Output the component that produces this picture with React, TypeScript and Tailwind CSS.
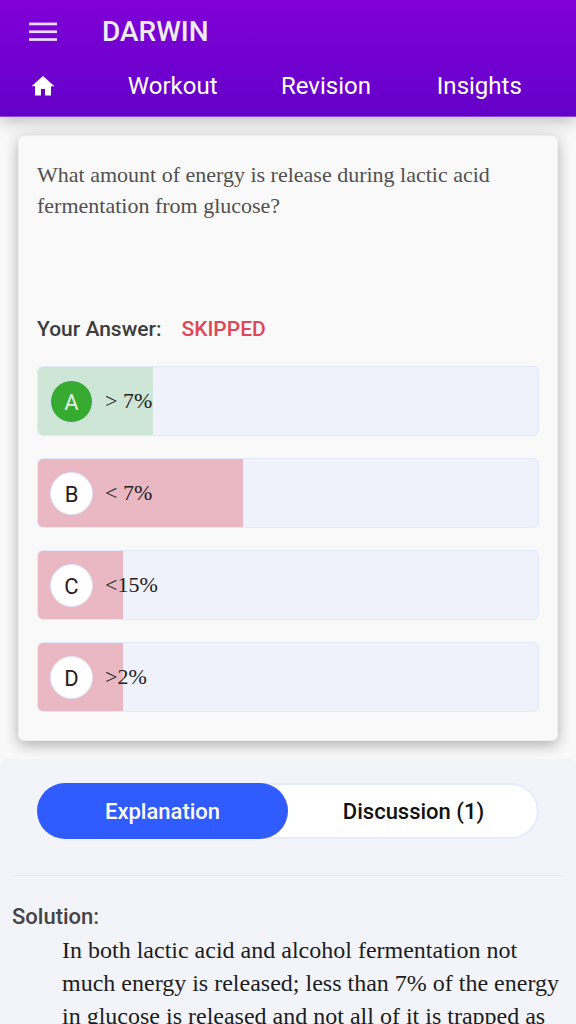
import React, { useState } from 'react';

interface Option {
  id: string;
  label: string;
  percent: number;
  correct?: boolean;
}

const navLinks = ['Workout', 'Revision', 'Insights'];

const options: Option[] = [
  { id: 'A', label: '> 7%', percent: 23, correct: true },
  { id: 'B', label: '< 7%', percent: 41 },
  { id: 'C', label: '<15%', percent: 17 },
  { id: 'D', label: '>2%', percent: 17 },
];

const Header = () => (
  <header className="relative z-10 border-b border-[#8f46dc] bg-linear-to-b from-[#8000d7] to-[#6400c8] text-white shadow-[0_4px_16px_rgba(0,0,0,0.25)]">
    <div className="flex h-16 items-center gap-11 px-7">
      <button type="button" aria-label="Open menu" className="text-[#ecdcf8]">
        <svg width="30" height="20" viewBox="0 0 30 20" fill="currentColor">
          <rect x="1" y="0.6" width="28" height="2.7" />
          <rect x="1" y="8.4" width="28" height="2.7" />
          <rect x="1" y="16.2" width="28" height="2.7" />
        </svg>
      </button>
      <h1 className="text-[28px] font-medium leading-8 text-[#ededed]">DARWIN</h1>
    </div>
    <nav className="flex h-13 items-start px-5 pt-1">
      <a href="#home" aria-label="Home" className="mr-[30px] flex h-9 w-[46px] items-center justify-center">
        <svg width="24" height="20" viewBox="0 0 24 20" fill="currentColor">
          <path d="M12 0 L23.5 10.3 H20 V19.6 H14 V13 H10 V19.6 H4 V10.3 H0.5 Z" />
        </svg>
      </a>
      {navLinks.map((link) => (
        <a key={link} href={`#${link.toLowerCase()}`} className="flex-1 text-center text-2xl leading-9">
          {link}
        </a>
      ))}
    </nav>
  </header>
);

const OptionRow = ({ option }: { option: Option }) => (
  <li className="relative flex h-[70px] items-center gap-3 overflow-hidden rounded-md border border-[#e2e8fd] bg-[#eff2fb] px-3">
    <div
      className={`absolute inset-y-0 left-0 ${option.correct ? 'bg-[#cde6d6]' : 'bg-[#e9b8c3]'}`}
      style={{ width: `${option.percent}%` }}
    />
    <span
      className={`relative flex size-[43px] items-center justify-center rounded-full border border-[#dfe3fa] pt-1 text-[22px] leading-6 ${
        option.correct ? 'bg-[#36ab30] text-[#e3f2e2]' : 'bg-white text-[#2c1820]'
      }`}
    >
      {option.id}
    </span>
    <span className="relative font-['Liberation_Serif',serif] text-[22px] leading-8 text-[#222]">{option.label}</span>
  </li>
);

const QuestionCard = () => (
  <section className="mx-[18px] mt-[18px] rounded-md border border-[#f0f0f0] bg-[#f9f9f9] px-[18px] pt-[23px] pb-7 shadow-[0_4px_14px_rgba(0,0,0,0.3)]">
    <p className="min-h-[154px] font-['Liberation_Serif',serif] text-[22px] leading-[31px] text-[#505050]">
      What amount of energy is release during lactic acid fermentation from glucose?
    </p>
    <p className="flex gap-5 text-[21px] font-medium leading-8 text-[#3c3c3c]">
      <span>Your Answer:</span>
      <span className="text-[#df4759]">SKIPPED</span>
    </p>
    <ul className="mt-[21px] flex flex-col gap-[22px]">
      {options.map((option) => (
        <OptionRow key={option.id} option={option} />
      ))}
    </ul>
  </section>
);

export default function App() {
  const [tab, setTab] = useState('explanation');

  const tabClass = (name: string) =>
    `h-14 flex-1 rounded-full text-[22px] font-medium ${tab === name ? 'bg-[#2f5bff] text-white' : 'text-[#111]'}`;

  return (
    <div className="min-h-screen bg-[#f9f9f9] font-[Roboto,sans-serif]">
      <Header />
      <main>
        <QuestionCard />
        <section className="mt-[18px] rounded-t-lg bg-[#f3f4fa] px-3 pt-6 pb-8">
          <div role="tablist" className="mx-[25px] flex h-14 items-center rounded-full bg-white inset-ring-2 inset-ring-[#e6eaff]">
            <button
              type="button"
              role="tab"
              aria-selected={tab === 'explanation'}
              className={tabClass('explanation')}
              onClick={() => setTab('explanation')}
            >
              Explanation
            </button>
            <button
              type="button"
              role="tab"
              aria-selected={tab === 'discussion'}
              className={tabClass('discussion')}
              onClick={() => setTab('discussion')}
            >
              Discussion (1)
            </button>
          </div>
          <hr className="mt-9 border-[#ececef]" />
          <h2 className="mt-[25px] text-[22px] font-medium leading-8 text-[#444]">Solution:</h2>
          <p className="pt-px pl-[50px] font-['Liberation_Serif',serif] text-2xl leading-[33px] text-[#1c1c1c]">
            In both lactic acid and alcohol fermentation not much energy is released; less than 7% of the energy in
            glucose is released and not all of it is trapped as
          </p>
        </section>
      </main>
    </div>
  );
}
